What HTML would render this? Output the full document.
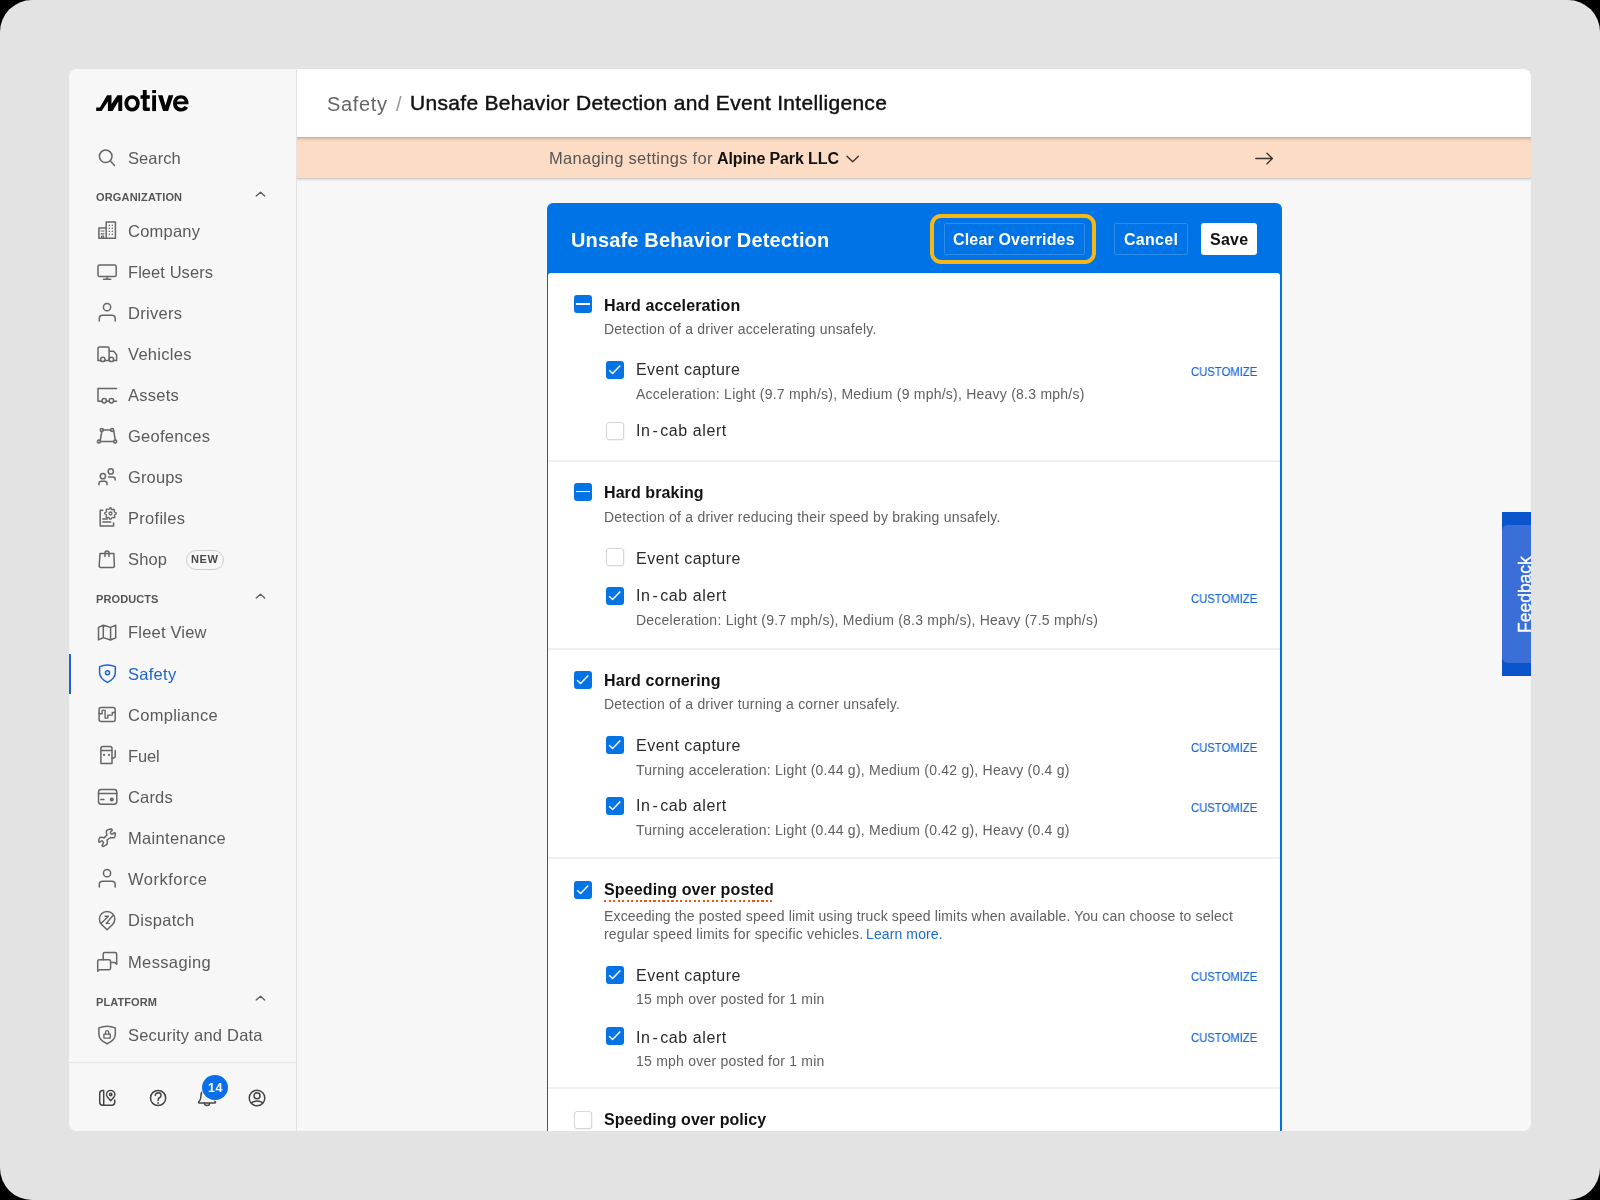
<!DOCTYPE html>
<html><head><meta charset="utf-8">
<style>
html,body{margin:0;padding:0;width:1600px;height:1200px;overflow:hidden;background:#000}
.outer{position:absolute;left:0;top:0;width:1600px;height:1200px;background:#e3e3e3;border-radius:32px}
.win{position:absolute;left:0;top:0;width:1600px;height:1200px;clip-path:inset(69px 69px 69px 69px round 8px);background:#f7f7f7}
.a{position:absolute}
.t{position:absolute;font-family:"Liberation Sans",sans-serif;line-height:1;white-space:nowrap;will-change:transform}
svg.i{position:absolute;overflow:visible}
.ic{fill:none;stroke:#666;stroke-width:1.5;stroke-linecap:round;stroke-linejoin:round}
.ic.blue{stroke:#1a62d6}
.ic.dark{stroke:#5c5c5c;stroke-width:1.3}
.ic.dark2{stroke:#3a3330;stroke-width:1.4}
.ic.dk{stroke:#454545;stroke-width:1.5}
.ic.white{stroke:#fff;stroke-width:1.45;stroke-linecap:butt}
.cb{position:absolute;width:18px;height:18px;border-radius:3px;box-sizing:border-box}
.cb.on{background:#0473e6}
.cb.off{background:#fff;border:1.5px solid #d6d6d6;box-shadow:0.6px 0.8px 0.6px rgba(0,0,0,0.07)}
.div{position:absolute;left:548px;width:732px;height:2px;background:#efefef}
</style></head><body>
<div class="outer"></div>
<div class="win">
  <!-- sidebar -->
  <div class="a" style="left:69px;top:69px;width:227px;height:1062px;background:#f7f7f7;border-right:1px solid #e2e2e2"></div>
  <div class="a" style="left:69px;top:1062px;width:227px;height:1px;background:#e4e4e4"></div>
  <!-- active bar -->
  <div class="a" style="left:69px;top:654px;width:2px;height:40px;background:#1a62d6"></div>
  <!-- header -->
  <div class="a" style="left:297px;top:69px;width:1234px;height:68px;background:#fff"></div>
  <!-- banner -->
  <div class="a" style="left:297px;top:137px;width:1234px;height:41px;background:linear-gradient(180deg,rgba(70,55,45,0.30) 0px,rgba(70,55,45,0.12) 2px,rgba(70,55,45,0.03) 4px,rgba(70,55,45,0) 5px),#fddcc5"></div>
  <div class="a" style="left:297px;top:178px;width:1234px;height:4px;background:linear-gradient(180deg,rgba(0,0,0,0.20) 0px,rgba(0,0,0,0.08) 1.5px,rgba(0,0,0,0.02) 3px,rgba(0,0,0,0) 4px)"></div>
  <!-- card -->
  <div class="a" style="left:547px;top:202.5px;width:735px;height:1000px;background:#0073e6;border-radius:6px 6px 0 0"></div>
  <div class="a" style="left:547px;top:273px;width:1px;height:1000px;background:#075de6"></div>
  <div class="a" style="left:548px;top:273px;width:732px;height:1000px;background:#fff;border-radius:3px 3px 0 0"></div>
  <div class="div" style="top:460px"></div>
  <div class="div" style="top:647.5px"></div>
  <div class="div" style="top:857px"></div>
  <div class="div" style="top:1087px"></div>
  <!-- card header buttons -->
  <div class="a" style="left:929.5px;top:213.8px;width:166px;height:50px;box-sizing:border-box;border:4px solid #f6b817;border-radius:11px"></div>
  <div class="a" style="left:943.5px;top:223px;width:141.5px;height:32px;box-sizing:border-box;border:1px solid rgba(255,255,255,0.18);border-radius:2px"></div>
  <div class="a" style="left:1113.7px;top:223px;width:74.3px;height:32px;box-sizing:border-box;border:1px solid rgba(255,255,255,0.18);border-radius:2px"></div>
  <div class="a" style="left:1201.2px;top:223px;width:55.8px;height:32px;background:#fff;border-radius:3px"></div>
  <!-- feedback tab -->
  <div class="a" style="left:1502px;top:511.5px;width:40px;height:164.5px;background:#0a55cc"></div>
  <div class="a" style="left:1502px;top:525px;width:40px;height:138px;background:#3b6fd8;border-radius:6px"></div>
  <div class="t" style="left:1516.6px;top:633.4px;font-size:17.5px;color:#fff;-webkit-text-stroke:0.3px #fff;transform:rotate(-90deg);transform-origin:0 0">Feedback</div>
  <!-- NEW badge -->
  <div class="a" style="left:185.75px;top:550px;width:38.25px;height:20px;box-sizing:border-box;border:1px solid #cfcfcf;border-radius:10px"></div>
  
  <svg class="i" style="left:97.3px;top:146.5px;" width="20" height="20" viewBox="0 0 20 20"><g class="ic"><circle cx="8.7" cy="9.3" r="6.3"/><path d="M13.2 13.8 L17.5 18.5"/></g></svg>
<svg class="i" style="left:97.3px;top:219.8px;" width="20" height="20" viewBox="0 0 20 20"><g class="ic"><path d="M1.9 18.3 V8 H9.2 V2 H18.4 V18.3 Z M9.2 8 V18.3"/><path d="M12.3 5.3 v0.1 M15.3 5.3 v0.1 M12.3 8.3 v0.1 M15.3 8.3 v0.1 M12.3 11.3 v0.1 M15.3 11.3 v0.1 M12.3 14.3 v0.1 M15.3 14.3 v0.1" stroke-width="1.4"/><path d="M4 11 H7 M4 13.8 H7 M4.6 18.3 V16 H6.5 V18.3" stroke-width="1.2"/></g></svg>
<svg class="i" style="left:97.3px;top:260.8px;" width="20" height="20" viewBox="0 0 20 20"><g class="ic"><rect x="1" y="3.9" width="18.2" height="11.6" rx="1.6"/><path d="M10.1 15.5 V18 M6.5 18.2 H13.7"/></g></svg>
<svg class="i" style="left:97.3px;top:301.8px;" width="20" height="20" viewBox="0 0 20 20"><g class="ic"><circle cx="10.05" cy="5.2" r="3.6"/><path d="M2.3 18.9 V16.6 Q2.3 13.3 5.6 13.3 H14.9 Q18.2 13.3 18.2 16.6 V18.9"/></g></svg>
<svg class="i" style="left:97.3px;top:342.8px;" width="20" height="20" viewBox="0 0 20 20"><g class="ic"><path d="M1 17.4 V5.3 Q1 4.1 2.2 4.1 H10.9 Q12.1 4.1 12.1 5.3 V8.3 H16.6 L19.6 11.8 V17.4 H16.6 M12.1 17.4 H8 M3.6 17.4 H1 M12.1 8.3 V17.4"/><circle cx="5.8" cy="16.4" r="2.2"/><circle cx="14.4" cy="16.4" r="2.2"/></g></svg>
<svg class="i" style="left:97.3px;top:383.8px;" width="20" height="20" viewBox="0 0 20 20"><g class="ic"><path d="M19.6 4.6 H1 V17.2 H4.9 M9.4 17.2 H12.2 M16.6 17.2 H19.6"/><circle cx="7.2" cy="16.8" r="2.2"/><circle cx="14.4" cy="16.8" r="2.2"/></g></svg>
<svg class="i" style="left:97.3px;top:424.8px;" width="20" height="20" viewBox="0 0 20 20"><g class="ic"><path d="M6.3 4.95 H13.6 M16.6 4.95 L18.2 15 M3.3 16.6 H16.6 M3.3 15 L4.8 6.5"/><circle cx="4.8" cy="4.95" r="1.5"/><circle cx="15.1" cy="4.95" r="1.5"/><circle cx="1.9" cy="16.6" r="1.5"/><circle cx="18.2" cy="16.6" r="1.5"/></g></svg>
<svg class="i" style="left:97.3px;top:465.8px;" width="20" height="20" viewBox="0 0 20 20"><g class="ic"><circle cx="5.9" cy="10.2" r="2.6"/><path d="M2 18.7 V17.6 Q2 15.2 4.4 15.2 H7.6 Q10 15.2 10 17.6 V18.7"/><circle cx="13.8" cy="5.4" r="2.6"/><path d="M11.6 10.9 H15.6 Q18.2 10.9 18.2 13.4 V14"/></g></svg>
<svg class="i" style="left:97.3px;top:506.79999999999995px;" width="20" height="20" viewBox="0 0 20 20"><g class="ic"><path d="M5.8 3.3 H3.2 V19 H16.6 V16"/><path d="M5.8 12.1 H10.2 M5.8 15.1 H13.7"/><path d="M14.2 2.3 L15.6 2.8 L16.4 2.1 L17.5 3 L17.1 4.1 L17.9 5.4 L19.1 5.7 L19.1 7.1 L17.9 7.5 L17.4 8.8 L18 9.9 L16.9 10.9 L15.8 10.4 L14.4 11 L14 12.2 L12.6 12.1 L12.3 10.9 L11 10.3 L9.9 10.9 L9 9.9 L9.5 8.7 L9 7.4 L7.8 7 L7.9 5.6 L9.1 5.2 L9.6 4 L9 2.9 L10 2 L11.2 2.5 L12.5 2 L12.9 0.8 L14.2 0.9 Z" stroke-width="1.3"/><circle cx="13.5" cy="6.5" r="1.5" stroke-width="1.3"/></g></svg>
<svg class="i" style="left:97.3px;top:547.8px;" width="20" height="20" viewBox="0 0 20 20"><g class="ic"><path d="M3 5.4 H16.8 L17.4 17.8 Q17.5 19.4 15.9 19.4 H3.7 Q2.1 19.4 2.2 17.8 Z"/><path d="M8 8.4 V4.9 Q8 2.9 10 2.9 Q12 2.9 12 4.9 V8.4"/></g></svg>
<svg class="i" style="left:97.3px;top:622.2px;" width="20" height="20" viewBox="0 0 20 20"><g class="ic"><path d="M1.5 5.4 L6.3 3.2 L13.6 5.4 L18.7 3.3 V15.9 L13.6 18 L6.3 15.6 L1.5 17.9 Z M6.3 3.2 V15.6 M13.6 5.4 V18"/></g></svg>
<svg class="i" style="left:97.3px;top:662.8px;" width="20" height="20" viewBox="0 0 20 20"><g class="ic blue"><path d="M2.6 3.6 Q10.5 0.4 18.3 3.6 V9.6 C18.3 14.3 15 17.3 10.5 19.4 C6 17.3 2.6 14.3 2.6 9.6 Z"/><circle cx="10.5" cy="9.8" r="2"/></g></svg>
<svg class="i" style="left:97.3px;top:704.0px;" width="20" height="20" viewBox="0 0 20 20"><g class="ic"><rect x="2.1" y="3.6" width="16.1" height="13.8" rx="2"/><path d="M2.1 9.7 H5.1 V6.4 H8.1 V14.1 H10.8 V11.1 H15.3 V8.5 H18.2" stroke-width="1.4"/></g></svg>
<svg class="i" style="left:97.3px;top:745.0px;" width="20" height="20" viewBox="0 0 20 20"><g class="ic"><path d="M3.9 18.6 V3.4 Q3.9 1.4 5.9 1.4 H13 Q15 1.4 15 3.4 V18.6 Z M3.9 5.4 H15"/><path d="M15 13 H16.3 Q18.2 13 18.2 11 V5.5"/><circle cx="7.1" cy="9.9" r="0.4" fill="#666"/><circle cx="12" cy="9.9" r="0.4" fill="#666"/></g></svg>
<svg class="i" style="left:97.3px;top:786.0px;" width="20" height="20" viewBox="0 0 20 20"><g class="ic"><rect x="1.5" y="3.6" width="18.3" height="14.6" rx="2.6"/><path d="M1.5 7.6 H19.8 M3.9 13.5 H6.9"/><circle cx="14.8" cy="13.5" r="1.3" fill="#666"/></g></svg>
<svg class="i" style="left:97.3px;top:827.0px;" width="20" height="20" viewBox="0 0 20 20"><g class="ic"><path d="M14.16 1.96 Q15.4 2.4 15.2 3.2 L13.5 5.1 Q13.4 6.9 14.16 7 Q15 7.2 15.8 6.75 L17.5 5.7 Q18.6 6 18.3 7 Q18.3 9.6 17.3 10.5 Q15.5 11.2 13.5 10.5 L10 13 Q10.8 15 10.2 16.75 Q8.4 19.2 6 19.5 Q4.9 19.4 5.2 18.4 L6.45 15.7 Q6 13.9 4.8 13.8 L2.9 15.1 Q1.6 15.3 1.66 14.25 Q1.7 11.6 2.9 10.5 Q4.8 9.8 7.1 10.9 L10 8 Q9 5.8 9.4 3.8 Q11.5 1.9 14.16 1.96 Z"/></g></svg>
<svg class="i" style="left:97.3px;top:868.2px;" width="20" height="20" viewBox="0 0 20 20"><g class="ic"><circle cx="10.05" cy="5.2" r="3.6"/><path d="M2.3 18.9 V16.6 Q2.3 13.3 5.6 13.3 H14.9 Q18.2 13.3 18.2 16.6 V18.9"/></g></svg>
<svg class="i" style="left:97.3px;top:909.5px;" width="20" height="20" viewBox="0 0 20 20"><g class="ic"><path d="M10.1 19.7 L4.87 14.75 A7.7 7.7 0 1 1 15.33 14.75 Z"/><path d="M8.1 6.2 H11.4 L4.3 13.3" stroke-width="1.4"/><path d="M16 5.5 L9.2 13.4 H12.2" stroke-width="1.4"/></g></svg>
<svg class="i" style="left:97.3px;top:950.7px;" width="20" height="20" viewBox="0 0 20 20"><g class="ic"><path d="M6.2 8.7 V3.1 Q6.2 1.5 7.8 1.5 H18.1 Q19.7 1.5 19.7 3.1 V13.3 L17.7 11.4 H13.7"/><path d="M0.7 20.2 V10.3 Q0.7 8.7 2.3 8.7 H12 Q13.6 8.7 13.6 10.3 V17.1 Q13.6 18.7 12 18.7 H2.4 Z"/></g></svg>
<svg class="i" style="left:97.3px;top:1023.7px;" width="20" height="20" viewBox="0 0 20 20"><g class="ic"><path d="M1.9 3.9 Q10.1 0.6 18.3 3.9 V10 C18.3 14.7 14.9 17.8 10.1 19.8 C5.3 17.8 1.9 14.7 1.9 10 Z"/><rect x="6.9" y="10.1" width="6.4" height="4" rx="0.3" stroke-width="1.4"/><path d="M8.5 10.1 V8.4 Q8.5 6.6 10.1 6.6 Q11.7 6.6 11.7 8.4 V10.1" stroke-width="1.4"/></g></svg>
<svg class="i" style="left:254px;top:190.8px;" width="12" height="7" viewBox="0 0 12 7"><g class="ic dark"><path d="M2.2 5.1 L6.5 1.2 L10.7 5.1"/></g></svg>
<svg class="i" style="left:254px;top:593.1px;" width="12" height="7" viewBox="0 0 12 7"><g class="ic dark"><path d="M2.2 5.1 L6.5 1.2 L10.7 5.1"/></g></svg>
<svg class="i" style="left:254px;top:995.3px;" width="12" height="7" viewBox="0 0 12 7"><g class="ic dark"><path d="M2.2 5.1 L6.5 1.2 L10.7 5.1"/></g></svg>
<svg class="i" style="left:845.5px;top:155px;" width="14" height="8" viewBox="0 0 14 8"><g class="ic dark2"><path d="M1 1.2 L6.7 6.7 L12.4 1.2"/></g></svg>
<svg class="i" style="left:1254px;top:152px;" width="20" height="13" viewBox="0 0 20 13"><g class="ic dark2"><path d="M1.8 6.5 H18.3 M13 1.2 L18.4 6.5 L13 11.8"/></g></svg>
<svg class="i" style="left:97.3px;top:1087.5px;" width="20" height="20" viewBox="0 0 20 20"><g class="ic dk"><path d="M6.7 2.5 H5.7 Q2.7 2.5 2.7 5.5 V14.25 Q2.7 17.25 5.7 17.25 H14.7 Q17.7 17.25 17.7 14.25 V12 M6.7 2.5 V17.25"/><path d="M13.7 12.75 L10.6 9.19 A4.1 4.1 0 1 1 16.8 9.19 Z"/><circle cx="13.7" cy="6.5" r="1.2"/></g></svg>
<svg class="i" style="left:147.5px;top:1087.5px;" width="20" height="20" viewBox="0 0 20 20"><g class="ic dk"><circle cx="10.1" cy="10" r="7.6"/><path d="M7.2 7.4 Q7.6 4.7 10.3 4.7 Q13 4.8 13.1 7.2 Q13.1 9 11.1 10 Q10.1 10.6 10.1 12.4"/><circle cx="10.1" cy="15" r="0.9" fill="#454545" stroke="none"/></g></svg>
<svg class="i" style="left:197px;top:1086.5px;" width="20" height="20" viewBox="0 0 20 20"><g class="ic dk"><path d="M10 2.5 Q4.4 2.5 4 8.5 Q3.8 12.5 2.6 13.8 Q1.4 14.8 1.5 15.3 Q1.6 16 2.5 16 H17.7 Q18.6 16 18.6 15.3 Q18.6 14.8 17.5 13.8 Q16.3 12.5 16.1 8.5 Q15.6 2.5 10 2.5 Z"/><path d="M7.4 16.3 Q7.6 18.6 10 18.6 Q12.4 18.6 12.6 16.3"/></g></svg>
<svg class="i" style="left:247.3px;top:1087.5px;" width="20" height="20" viewBox="0 0 20 20"><g class="ic dk"><circle cx="10" cy="10" r="7.8"/><circle cx="10" cy="7.8" r="3"/><path d="M4.4 15.2 Q5.5 13.1 10 13.1 Q14.5 13.1 15.6 15.2"/></g></svg>
<div class="cb on" style="left:574.25px;top:295px"></div>
<div class="a" style="left:576.45px;top:303.1px;width:13.6px;height:1.8px;background:#fff"></div>
<div class="cb on" style="left:574.25px;top:482.5px"></div>
<div class="a" style="left:576.45px;top:490.6px;width:13.6px;height:1.8px;background:#fff"></div>
<div class="cb on" style="left:574.25px;top:671px"></div>
<svg class="i" style="left:574.25px;top:671px;" width="18" height="18" viewBox="0 0 18 18"><g class="ic white"><path d="M3.2 9.2 L6.6 12.5 L14.3 4.5"/></g></svg>
<div class="cb on" style="left:574.25px;top:880.5px"></div>
<svg class="i" style="left:574.25px;top:880.5px;" width="18" height="18" viewBox="0 0 18 18"><g class="ic white"><path d="M3.2 9.2 L6.6 12.5 L14.3 4.5"/></g></svg>
<div class="cb off" style="left:574.25px;top:1110.75px"></div>
<div class="cb on" style="left:606.4px;top:361px"></div>
<svg class="i" style="left:606.4px;top:361px;" width="18" height="18" viewBox="0 0 18 18"><g class="ic white"><path d="M3.2 9.2 L6.6 12.5 L14.3 4.5"/></g></svg>
<div class="cb on" style="left:606.4px;top:586.7px"></div>
<svg class="i" style="left:606.4px;top:586.7px;" width="18" height="18" viewBox="0 0 18 18"><g class="ic white"><path d="M3.2 9.2 L6.6 12.5 L14.3 4.5"/></g></svg>
<div class="cb on" style="left:606.4px;top:735.8px"></div>
<svg class="i" style="left:606.4px;top:735.8px;" width="18" height="18" viewBox="0 0 18 18"><g class="ic white"><path d="M3.2 9.2 L6.6 12.5 L14.3 4.5"/></g></svg>
<div class="cb on" style="left:606.4px;top:797.2px"></div>
<svg class="i" style="left:606.4px;top:797.2px;" width="18" height="18" viewBox="0 0 18 18"><g class="ic white"><path d="M3.2 9.2 L6.6 12.5 L14.3 4.5"/></g></svg>
<div class="cb on" style="left:606.4px;top:965.5px"></div>
<svg class="i" style="left:606.4px;top:965.5px;" width="18" height="18" viewBox="0 0 18 18"><g class="ic white"><path d="M3.2 9.2 L6.6 12.5 L14.3 4.5"/></g></svg>
<div class="cb on" style="left:606.4px;top:1027px"></div>
<svg class="i" style="left:606.4px;top:1027px;" width="18" height="18" viewBox="0 0 18 18"><g class="ic white"><path d="M3.2 9.2 L6.6 12.5 L14.3 4.5"/></g></svg>
<div class="cb off" style="left:606.4px;top:422.3px"></div>
<div class="cb off" style="left:606.4px;top:548px"></div>
<svg class="i" style="left:0;top:0" width="200" height="120" viewBox="0 0 200 120"><g fill="#000"><path d="M96.2 111 L96.2 107.5 L99.9 107.5 L107 95.2 L111.5 95.2 L111.5 104 L117.4 95.2 L122.2 95.2 L122.2 111 L118.3 111 L118.3 101.4 L112.6 111 L107.9 111 L107.9 101.4 L101.6 111 Z"/><path fill-rule="evenodd" d="M132.1 95.2 A7.7 8.15 0 1 1 132.05 95.2 Z M132.1 98.7 A3.9 4.55 0 1 0 132.15 98.7 Z"/><path d="M142.8 90 H146.7 V95.3 H149.8 V98.75 H146.7 V107.4 H149.8 V111.1 H145 Q142.8 111.1 142.8 108.8 V98.75 H140.5 V95.3 H142.8 Z"/><rect x="152.2" y="90" width="3.8" height="3.1"/><rect x="152.2" y="95.3" width="3.8" height="15.8"/><path d="M158 95.3 H162.6 L165.5 105.5 L168.6 95.3 H173.3 L168.1 111.1 H163.1 Z"/><path d="M180.8 95.2 C185.6 95.2 188.5 98.5 188.5 103.1 L188.4 104.3 H176.9 C177.3 106.6 178.9 107.9 181.1 107.9 C182.7 107.9 183.8 107.3 184.6 106.1 L188 107.8 C186.6 110.3 184.2 111.5 181 111.5 C176.2 111.5 173.1 108.2 173.1 103.4 C173.1 98.5 176.3 95.2 180.8 95.2 Z M177 101.5 H184.6 C184.3 99.5 182.8 98.5 180.8 98.5 C178.9 98.5 177.4 99.6 177 101.5 Z" fill-rule="evenodd"/></g></svg>
  <div class="t" style="left:127.84px;top:150.00px;font-size:16.5px;font-weight:400;color:#5a5a5a;letter-spacing:0.092px;">Search</div>
<div class="t" style="left:96.06px;top:192.00px;font-size:11px;font-weight:700;color:#555;letter-spacing:0.176px;">ORGANIZATION</div>
<div class="t" style="left:127.94px;top:223.00px;font-size:16.5px;font-weight:400;color:#5a5a5a;letter-spacing:0.227px;">Company</div>
<div class="t" style="left:127.94px;top:264.00px;font-size:16.5px;font-weight:400;color:#5a5a5a;letter-spacing:0.063px;">Fleet Users</div>
<div class="t" style="left:127.94px;top:305.00px;font-size:16.5px;font-weight:400;color:#5a5a5a;letter-spacing:0.290px;">Drivers</div>
<div class="t" style="left:127.94px;top:346.00px;font-size:16.5px;font-weight:400;color:#5a5a5a;letter-spacing:0.289px;">Vehicles</div>
<div class="t" style="left:127.94px;top:387.00px;font-size:16.5px;font-weight:400;color:#5a5a5a;letter-spacing:0.242px;">Assets</div>
<div class="t" style="left:127.94px;top:428.00px;font-size:16.5px;font-weight:400;color:#5a5a5a;letter-spacing:0.272px;">Geofences</div>
<div class="t" style="left:127.94px;top:469.00px;font-size:16.5px;font-weight:400;color:#5a5a5a;letter-spacing:0.126px;">Groups</div>
<div class="t" style="left:127.94px;top:510.00px;font-size:16.5px;font-weight:400;color:#5a5a5a;letter-spacing:0.280px;">Profiles</div>
<div class="t" style="left:127.94px;top:551.00px;font-size:16.5px;font-weight:400;color:#5a5a5a;letter-spacing:0.148px;">Shop</div>
<div class="t" style="left:96.16px;top:594.00px;font-size:11px;font-weight:700;color:#555;letter-spacing:0.104px;">PRODUCTS</div>
<div class="t" style="left:127.74px;top:624.00px;font-size:16.5px;font-weight:400;color:#5a5a5a;letter-spacing:0.195px;">Fleet View</div>
<div class="t" style="left:127.74px;top:666.00px;font-size:16.5px;font-weight:400;color:#1a62d6;letter-spacing:0.282px;">Safety</div>
<div class="t" style="left:127.74px;top:707.00px;font-size:16.5px;font-weight:400;color:#5a5a5a;letter-spacing:0.285px;">Compliance</div>
<div class="t" style="left:127.74px;top:748.00px;font-size:16.5px;font-weight:400;color:#5a5a5a;letter-spacing:-0.106px;">Fuel</div>
<div class="t" style="left:127.74px;top:789.00px;font-size:16.5px;font-weight:400;color:#5a5a5a;letter-spacing:0.169px;">Cards</div>
<div class="t" style="left:127.74px;top:830.00px;font-size:16.5px;font-weight:400;color:#5a5a5a;letter-spacing:0.331px;">Maintenance</div>
<div class="t" style="left:127.74px;top:871.00px;font-size:16.5px;font-weight:400;color:#5a5a5a;letter-spacing:0.500px;">Workforce</div>
<div class="t" style="left:127.74px;top:912.00px;font-size:16.5px;font-weight:400;color:#5a5a5a;letter-spacing:0.298px;">Dispatch</div>
<div class="t" style="left:127.74px;top:954.00px;font-size:16.5px;font-weight:400;color:#5a5a5a;letter-spacing:0.362px;">Messaging</div>
<div class="t" style="left:96.16px;top:997.00px;font-size:11px;font-weight:700;color:#555;letter-spacing:0.080px;">PLATFORM</div>
<div class="t" style="left:127.74px;top:1027.00px;font-size:16.5px;font-weight:400;color:#5a5a5a;letter-spacing:0.208px;">Security and Data</div>
<div class="t" style="left:326.70px;top:94.00px;font-size:20px;font-weight:400;color:#666;letter-spacing:0.679px;">Safety</div>
<div class="t" style="left:395.70px;top:94.00px;font-size:20px;font-weight:400;color:#999;letter-spacing:0.000px;">/</div>
<div class="t" style="left:409.96px;top:92.00px;font-size:21px;font-weight:400;color:#111;letter-spacing:0.310px;-webkit-text-stroke:0.45px #111">Unsafe Behavior Detection and Event Intelligence</div>
<div class="t" style="left:548.94px;top:150.00px;font-size:16.5px;font-weight:400;color:#555;letter-spacing:0.281px;">Managing settings for</div>
<div class="t" style="left:717.36px;top:151.00px;font-size:16px;font-weight:700;color:#111;letter-spacing:-0.116px;">Alpine Park LLC</div>
<div class="t" style="left:571.20px;top:230.00px;font-size:20px;font-weight:700;color:#fff;letter-spacing:0.154px;">Unsafe Behavior Detection</div>
<div class="t" style="left:953.36px;top:232.00px;font-size:16px;font-weight:700;color:#fff;letter-spacing:0.169px;">Clear Overrides</div>
<div class="t" style="left:1123.66px;top:232.00px;font-size:16px;font-weight:700;color:#fff;letter-spacing:0.278px;">Cancel</div>
<div class="t" style="left:1210.06px;top:232.00px;font-size:16px;font-weight:700;color:#111;letter-spacing:0.262px;">Save</div>
<div class="t" style="left:603.56px;top:298.00px;font-size:16px;font-weight:700;color:#111;letter-spacing:0.121px;">Hard acceleration</div>
<div class="t" style="left:603.64px;top:322.00px;font-size:14px;font-weight:400;color:#606060;letter-spacing:0.204px;">Detection of a driver accelerating unsafely.</div>
<div class="t" style="left:635.66px;top:362.00px;font-size:16px;font-weight:400;color:#2a2a2a;letter-spacing:0.435px;">Event capture</div>
<div class="t" style="left:1190.82px;top:366.00px;font-size:12px;font-weight:400;color:#1866d0;letter-spacing:0.000px;transform:scaleX(0.9407);transform-origin:0 0;-webkit-text-stroke:0.15px #1866d0">CUSTOMIZE</div>
<div class="t" style="left:635.74px;top:387.00px;font-size:14px;font-weight:400;color:#606060;letter-spacing:0.235px;">Acceleration: Light (9.7 mph/s), Medium (9 mph/s), Heavy (8.3 mph/s)</div>
<div class="t" style="left:635.66px;top:423.00px;font-size:16px;font-weight:400;color:#2a2a2a;letter-spacing:0.580px;">In&#8202;-&#8202;cab alert</div>
<div class="t" style="left:603.56px;top:485.00px;font-size:16px;font-weight:700;color:#111;letter-spacing:0.079px;">Hard braking</div>
<div class="t" style="left:603.64px;top:510.00px;font-size:14px;font-weight:400;color:#606060;letter-spacing:0.209px;">Detection of a driver reducing their speed by braking unsafely.</div>
<div class="t" style="left:635.66px;top:551.00px;font-size:16px;font-weight:400;color:#2a2a2a;letter-spacing:0.477px;">Event capture</div>
<div class="t" style="left:635.66px;top:588.00px;font-size:16px;font-weight:400;color:#2a2a2a;letter-spacing:0.580px;">In&#8202;-&#8202;cab alert</div>
<div class="t" style="left:1190.82px;top:593.00px;font-size:12px;font-weight:400;color:#1866d0;letter-spacing:0.000px;transform:scaleX(0.9407);transform-origin:0 0;-webkit-text-stroke:0.15px #1866d0">CUSTOMIZE</div>
<div class="t" style="left:635.74px;top:613.00px;font-size:14px;font-weight:400;color:#606060;letter-spacing:0.232px;">Deceleration: Light (9.7 mph/s), Medium (8.3 mph/s), Heavy (7.5 mph/s)</div>
<div class="t" style="left:603.56px;top:673.00px;font-size:16px;font-weight:700;color:#111;letter-spacing:0.136px;">Hard cornering</div>
<div class="t" style="left:603.64px;top:697.00px;font-size:14px;font-weight:400;color:#606060;letter-spacing:0.207px;">Detection of a driver turning a corner unsafely.</div>
<div class="t" style="left:635.66px;top:738.00px;font-size:16px;font-weight:400;color:#2a2a2a;letter-spacing:0.477px;">Event capture</div>
<div class="t" style="left:1190.82px;top:742.00px;font-size:12px;font-weight:400;color:#1866d0;letter-spacing:0.000px;transform:scaleX(0.9407);transform-origin:0 0;-webkit-text-stroke:0.15px #1866d0">CUSTOMIZE</div>
<div class="t" style="left:635.74px;top:763.00px;font-size:14px;font-weight:400;color:#606060;letter-spacing:0.227px;">Turning acceleration: Light (0.44 g), Medium (0.42 g), Heavy (0.4 g)</div>
<div class="t" style="left:635.66px;top:798.00px;font-size:16px;font-weight:400;color:#2a2a2a;letter-spacing:0.580px;">In&#8202;-&#8202;cab alert</div>
<div class="t" style="left:1190.82px;top:802.00px;font-size:12px;font-weight:400;color:#1866d0;letter-spacing:0.000px;transform:scaleX(0.9407);transform-origin:0 0;-webkit-text-stroke:0.15px #1866d0">CUSTOMIZE</div>
<div class="t" style="left:635.74px;top:823.00px;font-size:14px;font-weight:400;color:#606060;letter-spacing:0.227px;">Turning acceleration: Light (0.44 g), Medium (0.42 g), Heavy (0.4 g)</div>
<div class="t" style="left:603.56px;top:882.00px;font-size:16px;font-weight:700;color:#111;letter-spacing:0.135px;">Speeding over posted</div>
<div class="t" style="left:603.64px;top:909.00px;font-size:14px;font-weight:400;color:#606060;letter-spacing:0.153px;">Exceeding the posted speed limit using truck speed limits when available. You can choose to select</div>
<div class="t" style="left:603.64px;top:927.00px;font-size:14px;font-weight:400;color:#606060;letter-spacing:0.205px;">regular speed limits for specific vehicles.</div>
<div class="t" style="left:865.69px;top:927.00px;font-size:14px;font-weight:400;color:#1b6bd6;letter-spacing:0.111px;">Learn more.</div>
<div class="t" style="left:635.66px;top:968.00px;font-size:16px;font-weight:400;color:#2a2a2a;letter-spacing:0.477px;">Event capture</div>
<div class="t" style="left:1190.82px;top:971.00px;font-size:12px;font-weight:400;color:#1866d0;letter-spacing:0.000px;transform:scaleX(0.9407);transform-origin:0 0;-webkit-text-stroke:0.15px #1866d0">CUSTOMIZE</div>
<div class="t" style="left:635.74px;top:992.00px;font-size:14px;font-weight:400;color:#606060;letter-spacing:0.231px;">15 mph over posted for 1 min</div>
<div class="t" style="left:635.66px;top:1030.00px;font-size:16px;font-weight:400;color:#2a2a2a;letter-spacing:0.580px;">In&#8202;-&#8202;cab alert</div>
<div class="t" style="left:1190.82px;top:1032.00px;font-size:12px;font-weight:400;color:#1866d0;letter-spacing:0.000px;transform:scaleX(0.9407);transform-origin:0 0;-webkit-text-stroke:0.15px #1866d0">CUSTOMIZE</div>
<div class="t" style="left:635.74px;top:1054.00px;font-size:14px;font-weight:400;color:#606060;letter-spacing:0.231px;">15 mph over posted for 1 min</div>
<div class="t" style="left:603.56px;top:1112.00px;font-size:16px;font-weight:700;color:#111;letter-spacing:0.067px;">Speeding over policy</div>
<div class="t" style="left:191.16px;top:554.00px;font-size:11px;font-weight:700;color:#4a4a4a;letter-spacing:0.644px;">NEW</div>
  <!-- notif badge -->
  <div class="a" style="left:202px;top:1074.75px;width:25.5px;height:25.5px;border-radius:50%;background:#0a6fe8;box-shadow:0 0 0 0.8px rgba(255,255,255,0.9)"></div>
  <div class="t" style="left:207.6px;top:1082px;font-size:12.5px;font-weight:700;color:#fff;letter-spacing:0.6px">14</div>
  <div class="a" style="left:604px;top:900.25px;width:168px;height:2px;background:repeating-linear-gradient(90deg,#f4520e 0 2px,transparent 2px 4.5px)"></div>
</div>
</body></html>
